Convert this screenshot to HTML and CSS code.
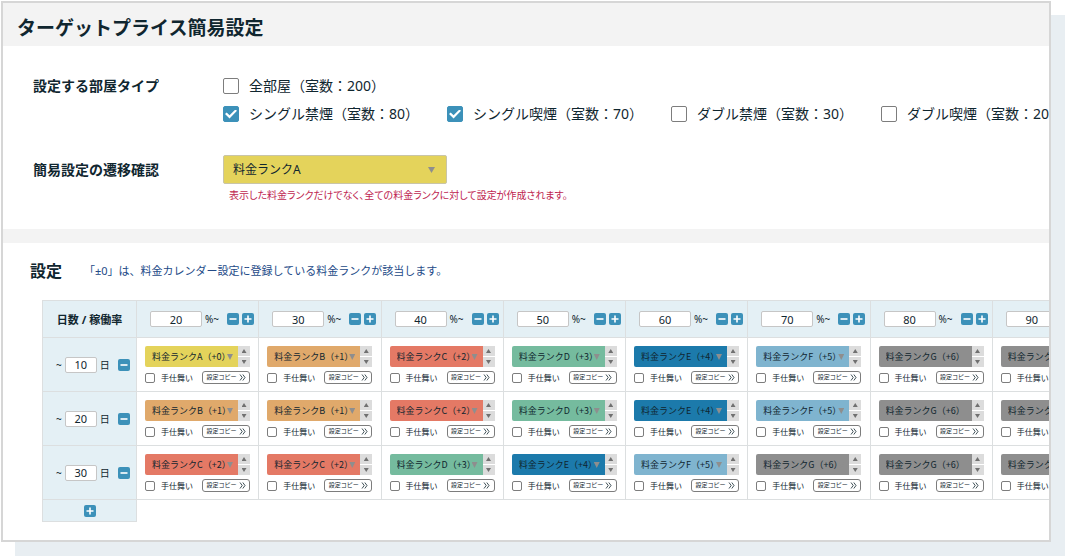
FILE: index.html
```html
<!DOCTYPE html>
<html lang="ja">
<head>
<meta charset="utf-8">
<meta name="viewport" content="width=device-width, initial-scale=1">
<title>ターゲットプライス簡易設定</title>
<link rel="stylesheet" href="styles.css">
</head>
<body>
<main class="panel">
  <header class="panel-header"><h1 class="title">ターゲットプライス簡易設定</h1></header>

  <form class="form">
    <div class="form-row">
      <span class="form-label">設定する部屋タイプ</span>
      <div class="rooms">
        <div class="room-line">
          <label class="room"><input class="check" type="checkbox">全部屋（室数：200）</label>
        </div>
        <div class="room-line">
          <label class="room"><input class="check" type="checkbox" checked>シングル禁煙（室数：80）</label>
          <label class="room"><input class="check" type="checkbox" checked>シングル喫煙（室数：70）</label>
          <label class="room"><input class="check" type="checkbox">ダブル禁煙（室数：30）</label>
          <label class="room"><input class="check" type="checkbox">ダブル喫煙（室数：20）</label>
        </div>
      </div>
    </div>
    <div class="form-row">
      <label class="form-label form-label-select" for="rank">簡易設定の遷移確認</label>
      <div class="rank-field">
        <span class="select-wrap">
          <select class="rank-select" id="rank"><option>料金ランクA</option></select>
        </span>
        <p class="note">表示した料金ランクだけでなく、全ての料金ランクに対して設定が作成されます。</p>
      </div>
    </div>
  </form>

  <section class="settings">
    <div class="settings-head">
      <h2 class="settings-title">設定</h2>
      <p class="hint">「±0」は、料金カレンダー設定に登録している料金ランクが該当します。</p>
    </div>
    <table class="grid">
      <thead><tr id="rates"><th class="corner" scope="col">日数 / 稼働率</th></tr></thead>
      <tbody id="days"></tbody>
      <tfoot><tr><th class="add-row"><button class="step" type="button" aria-label="行を追加"><svg class="step-icon" viewBox="0 0 12 12"><path d="M2.5 6h7M6 2.5v7"/></svg></button></th></tr></tfoot>
    </table>
  </section>
</main>
<script src="app.js"></script>
</body>
</html>
```

FILE: styles.css
```css
* { box-sizing: border-box; }

body {
  margin: 0;
  padding: 1px 15px 15px 1px;
  background: #fff;
  color: #10262f;
  font-family: "Noto Sans", "Noto Sans CJK JP", sans-serif;
}

h1, h2, p { margin: 0; }

input, select, button {
  margin: 0;
  padding: 0;
  color: inherit;
  font-family: inherit;
}

.panel {
  overflow: hidden;
  padding-bottom: 18px;
  border: 2px solid #d6d6d6;
  background: #fff;
  box-shadow: 14px 14px 0 #e8eef2;
}

.panel-header {
  padding: 13px 14px 6px;
  background: #f3f3f3;
}

.title { font-size: 19px; line-height: 24px; }

.form {
  display: flex;
  flex-direction: column;
  gap: 31px;
  padding: 30px 0 26px 30px;
  border-bottom: 14px solid #f3f3f3;
}

.form-row { display: flex; }

.form-label {
  flex: 0 0 190px;
  font-size: 14px;
  font-weight: 700;
  line-height: 20px;
}

.form-label-select { padding-top: 5px; }

.rooms {
  display: flex;
  flex-direction: column;
  gap: 8px;
}

.room-line { display: flex; gap: 28px; }

.room {
  display: flex;
  align-items: center;
  gap: 10px;
  font-size: 14px;
  line-height: 20px;
  white-space: nowrap;
}

.check {
  display: grid;
  place-items: center;
  appearance: none;
  width: 16px;
  height: 16px;
  border: 1px solid #7d7d7d;
  border-radius: 2px;
  background: #fff;
}

.check:checked { border-color: #3c91b9; background: #3c91b9; }

.check:checked::before {
  content: "";
  width: 12px;
  height: 9px;
  background: #fff;
  clip-path: polygon(0 50%, 14% 33%, 38% 65%, 86% 0, 100% 15%, 38% 100%);
}

.select-wrap { position: relative; display: block; }

.select-wrap::after {
  content: "";
  position: absolute;
  top: 12px;
  right: 12px;
  width: 7px;
  height: 6px;
  background: #8e8e8e;
  clip-path: polygon(0 0, 100% 0, 50% 100%);
  pointer-events: none;
}

.rank-field { width: 224px; }

.rank-select {
  display: block;
  appearance: none;
  width: 100%;
  height: 29px;
  padding: 0 9px;
  border: 1px solid #c9c5a8;
  border-radius: 2px;
  background: #e4d35b;
  font-size: 12px;
  line-height: 26px;
}

.note {
  padding: 3px 0 0 6px;
  color: #be1e50;
  font-size: 10px;
  font-feature-settings: "palt";
  line-height: 16px;
  white-space: nowrap;
}

.settings-head {
  display: flex;
  align-items: center;
  gap: 22px;
  padding: 16px 27px 17px;
}

.settings-title { font-size: 16px; line-height: 24px; }

.hint {
  color: #234a87;
  font-size: 11px;
  line-height: 20px;
  white-space: nowrap;
}

.grid {
  width: 1073px;
  margin-left: 39px;
  border-collapse: collapse;
  table-layout: fixed;
}

.grid th, .grid td {
  padding: 0;
  border: 1px solid #dcdfe0;
  font-weight: 400;
}

.grid th { background: #e4f0f5; }

.grid .corner {
  width: 94px;
  height: 37px;
  font-size: 11px;
  font-weight: 700;
}

.rate, .day {
  display: flex;
  align-items: center;
  font-size: 10px;
  line-height: 16px;
}

.rate { gap: 3px; padding-left: 13px; }
.day { gap: 3px; padding-left: 13px; }

.number {
  height: 16px;
  border: 1px solid #c6c6c6;
  border-radius: 2px;
  background: #fff;
  font-size: 11px;
  text-align: center;
}

.rate .number { width: 52px; }
.day .number { width: 32px; }
.unit { width: 19px; text-align: left; }
.day .unit { width: 15px; }

.step {
  display: block;
  flex: none;
  width: 12px;
  height: 12px;
  border: 0;
  border-radius: 2px;
  background: #3c91b9;
}

.step-icon {
  display: block;
  width: 12px;
  height: 12px;
  fill: none;
  stroke: #fff;
  stroke-width: 1.6;
}

.grid .add-row { height: 22px; }
.add-row .step { margin: 0 auto; }

.cell {
  display: flex;
  flex-direction: column;
  gap: 4px;
  width: 113px;
  padding: 8px 0 7px 8px;
}

.picker { display: flex; height: 21px; }
.picker .select-wrap { flex: 1; }
.picker .select-wrap::after { top: 8px; right: 5px; width: 6px; }

.cell-select {
  display: block;
  appearance: none;
  width: 100%;
  height: 21px;
  padding: 0 7px;
  border: 0;
  border-radius: 2px 0 0 2px;
  font-family: "Noto Sans CJK JP", "Noto Sans", sans-serif;
  font-size: 9px;
}

.rank-a { background: #e4d35b; }
.rank-b { background: #e0a96b; }
.rank-c { background: #e47965; }
.rank-d { background: #75bb9e; }
.rank-e { background: #1c7aab; }
.rank-f { background: #7fb4cf; }
.rank-g { background: #8e8e8e; }

.spinner {
  display: grid;
  gap: 1px;
  width: 12px;
}

.spin {
  display: grid;
  place-items: center;
  border: 0;
  background: #dcdcdc;
}

.spin::before {
  content: "";
  width: 5px;
  height: 4px;
  background: #707070;
  clip-path: polygon(50% 0, 100% 100%, 0 100%);
}

.spin-down::before { clip-path: polygon(0 0, 100% 0, 50% 100%); }

.actions {
  display: flex;
  align-items: center;
  justify-content: space-between;
}

.stop {
  display: flex;
  align-items: center;
  gap: 6px;
  font-size: 8px;
  line-height: 13px;
  white-space: nowrap;
}

.stop .check { width: 10px; height: 10px; }

.copy {
  display: flex;
  align-items: center;
  justify-content: center;
  gap: 2px;
  width: 48px;
  height: 13px;
  border: 1px solid #7d7d7d;
  border-radius: 3px;
  background: #fff;
  font-size: 6px;
  line-height: 11px;
  white-space: nowrap;
}

.copy-icon {
  flex: none;
  width: 7px;
  height: 7px;
  fill: none;
  stroke: #10262f;
  stroke-width: 0.8;
}
```

FILE: app.js
```js
const rates = [20, 30, 40, 50, 60, 70, 80, 90];
const days = [
  { day: 10, ranks: 'ABCDEFGG' },
  { day: 20, ranks: 'BBCDEFGG' },
  { day: 30, ranks: 'CCDEFGGG' },
];

const step = (label, path) =>
  `<button class="step" type="button" aria-label="${label}"><svg class="step-icon" viewBox="0 0 12 12"><path d="${path}"/></svg></button>`;
const minus = step('削除', 'M2.5 6h7');
const plus = step('追加', 'M2.5 6h7M6 2.5v7');

const cell = (rank) => `<td><div class="cell">
  <div class="picker">
    <span class="select-wrap"><select class="cell-select rank-${rank.toLowerCase()}" aria-label="料金ランク"><option>料金ランク${rank}（+${'ABCDEFG'.indexOf(rank)}）</option></select></span>
    <span class="spinner"><button class="spin" type="button" aria-label="上げる"></button><button class="spin spin-down" type="button" aria-label="下げる"></button></span>
  </div>
  <div class="actions">
    <label class="stop"><input class="check" type="checkbox">手仕舞い</label>
    <button class="copy" type="button">設定コピー<svg class="copy-icon" viewBox="0 0 7 7"><path d="M1 .5l2.2 3L1 6.5M3.8 .5l2.2 3-2.2 3"/></svg></button>
  </div>
</div></td>`;

document.getElementById('rates').insertAdjacentHTML('beforeend', rates.map((rate) =>
  `<th scope="col"><div class="rate"><input class="number" type="text" value="${rate}" aria-label="稼働率"><span class="unit">%~</span>${minus}${plus}</div></th>`).join(''));

document.getElementById('days').innerHTML = days.map(({ day, ranks }) =>
  `<tr><th scope="row"><div class="day"><span>~</span><input class="number" type="text" value="${day}" aria-label="日数"><span class="unit">日</span>${minus}</div></th>${[...ranks].map(cell).join('')}</tr>`).join('');
```
